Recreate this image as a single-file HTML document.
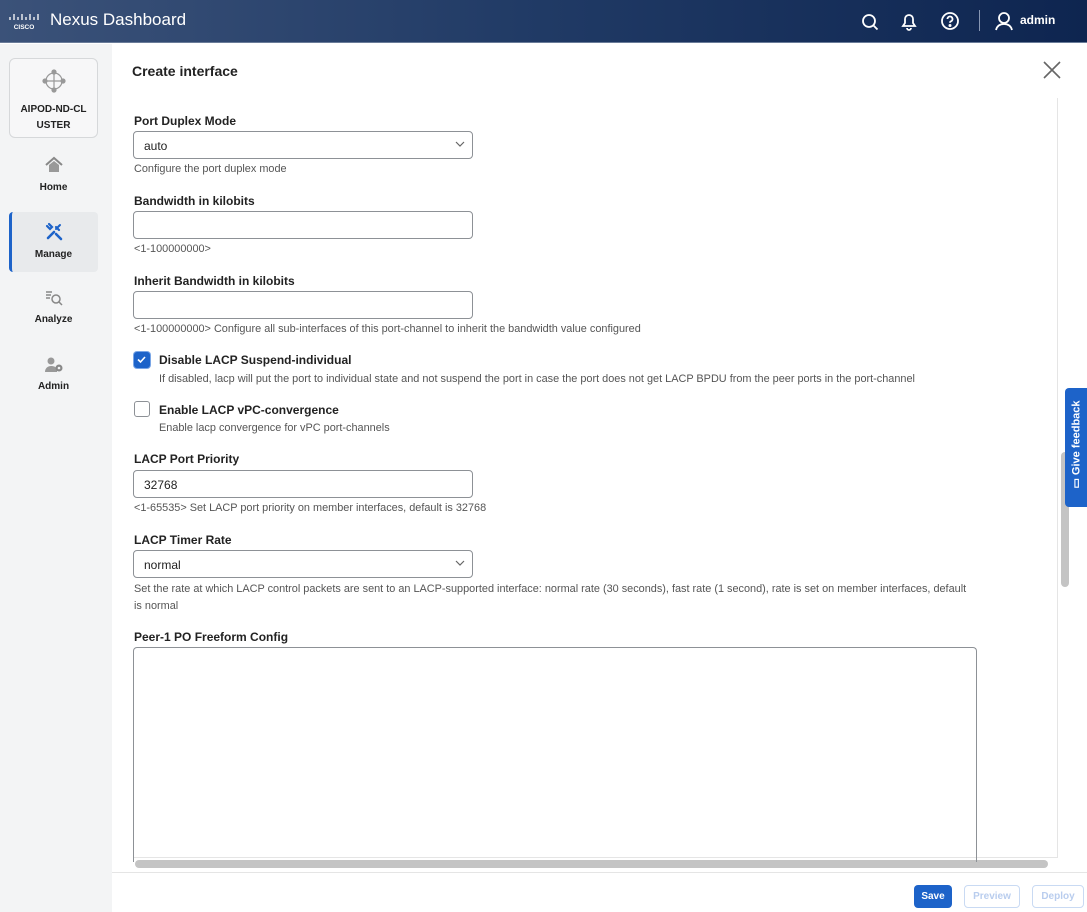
<!DOCTYPE html>
<html><head><meta charset="utf-8"><style>
*{box-sizing:border-box;margin:0;padding:0}
body{width:1087px;height:912px;overflow:hidden;font-family:"Liberation Sans",sans-serif;background:#fff;position:relative;color:#222}
.hdr{position:absolute;left:0;top:0;width:1087px;height:43px;background:linear-gradient(90deg,#3b5279,#203a65 50%,#0e2550);border-bottom:1px solid #6a7c99}
.hdr .t{position:absolute;left:50px;top:10px;color:#fff;font-size:17px}
.side{position:absolute;left:0;top:44px;width:112px;height:868px;background:#f3f4f5}
.card{position:absolute;left:9px;top:14px;width:89px;height:80px;border:1px solid #d6d8da;border-radius:6px;background:#f7f7f8;text-align:center;font-size:10px;font-weight:bold;line-height:16px;color:#222}
.nav{position:absolute;left:9px;width:89px;text-align:center;font-size:10px;font-weight:bold;color:#222}
.main{position:absolute;left:112px;top:44px;right:0;bottom:0;background:#fff}
.lbl{position:absolute;left:134px;font-size:12px;font-weight:bold;color:#222}
.inp{position:absolute;left:133px;width:340px;height:28px;border:1.5px solid #8d9196;border-radius:4px;font-size:12px;padding:7px 10px;color:#222}
.help{position:absolute;left:134px;font-size:10.9px;color:#555;white-space:nowrap}
.cb{position:absolute;left:134px;width:16px;height:16px;border:1.5px solid #8d9196;border-radius:3px}
.btn{position:absolute;top:885px;height:23px;border-radius:4px;font-size:10px;font-weight:bold;text-align:center;line-height:21px}
</style></head><body>
<div class="hdr">
<svg style="position:absolute;left:9px;top:11px" width="32" height="20" viewBox="0 0 32 20"><g stroke="#fff" stroke-width="1.3"><path d="M1 6v3M5 3v6M9 6v3M13 3v6M17 6v3M21 3v6M25 6v3M29 3v6"/></g><text x="15" y="18" fill="#fff" font-size="6.5" font-weight="bold" text-anchor="middle" font-family="Liberation Sans">CISCO</text></svg>
<div class="t">Nexus Dashboard</div>
<svg style="position:absolute;left:860px;top:12px" width="20" height="20" viewBox="0 0 20 20" fill="none" stroke="#fff" stroke-width="1.8"><circle cx="9" cy="9" r="6"/><path d="M13.5 13.5l4 4"/></svg>
<svg style="position:absolute;left:899px;top:11px" width="20" height="20" viewBox="0 0 20 20" fill="none" stroke="#fff" stroke-width="1.8"><path d="M4 15h12l-2-3V8a4 4 0 0 0-8 0v4z"/><path d="M8 17a2 2 0 0 0 4 0"/></svg>
<svg style="position:absolute;left:940px;top:11px" width="20" height="20" viewBox="0 0 20 20" fill="none" stroke="#fff" stroke-width="1.8"><circle cx="10" cy="10" r="8"/><path d="M7.5 8a2.5 2.5 0 1 1 3.5 2.3c-.7.3-1 .8-1 1.5"/><circle cx="10" cy="14.5" r=".6" fill="#fff"/></svg>
<div style="position:absolute;left:979px;top:10px;width:1px;height:21px;background:#8797b3"></div>
<svg style="position:absolute;left:994px;top:11px" width="20" height="20" viewBox="0 0 20 20" fill="none" stroke="#fff" stroke-width="1.8"><circle cx="10" cy="7" r="5"/><path d="M2 19c1-4 4-6 8-6s7 2 8 6"/></svg>
<div style="position:absolute;left:1020px;top:13px;color:#fff;font-size:12px;font-weight:bold">admin</div>
</div>
<div class="side">
<div class="card"><svg style="margin-top:9px" width="26" height="26" viewBox="0 0 26 26" fill="none" stroke="#999" stroke-width="1.2"><circle cx="13" cy="13" r="8"/><path d="M5 13h16M13 5v16"/><g fill="#999"><circle cx="13" cy="4" r="2"/><circle cx="13" cy="22" r="2"/><circle cx="4" cy="13" r="2"/><circle cx="22" cy="13" r="2"/></g></svg><div style="margin-top:2px">AIPOD-ND-CL<br>USTER</div></div>
<div class="nav" style="top:112px"><svg width="20" height="18" viewBox="0 0 20 18"><path d="M2 9L10 2l8 7" stroke="#888" stroke-width="2" fill="none"/><path d="M5 9v7h10V9L10 5z" fill="#999"/></svg><div style="margin-top:5px">Home</div></div>
<div style="position:absolute;left:9px;top:168px;width:89px;height:60px;background:#e8eaec;border-radius:4px;border-left:3px solid #1d63c9"></div>
<div class="nav" style="top:178px"><svg width="20" height="20" viewBox="0 0 20 20" fill="none" stroke="#1d63c9" stroke-width="2.6" stroke-linecap="round"><path d="M4 16l6-6M12 12l5 5"/><path d="M16 3l-4 4" stroke-width="2"/><path d="M3 4l3 3 2-2-3-3" stroke-width="2.2"/><path d="M12 5l3 3" stroke-width="2.2"/></svg><div style="margin-top:4px">Manage</div></div>
<div class="nav" style="top:245px"><svg width="20" height="18" viewBox="0 0 20 18" stroke="#888" stroke-width="1.5" fill="none"><path d="M2 3h6M2 6h5M2 9h4"/><circle cx="12" cy="10" r="4"/><path d="M15 13l3 3"/></svg><div style="margin-top:4px">Analyze</div></div>
<div class="nav" style="top:312px"><svg width="22" height="18" viewBox="0 0 22 18" fill="#999"><circle cx="8" cy="5" r="3.5"/><path d="M2 16c0-4 3-6 6-6s5 1 6 3v3z"/><circle cx="16" cy="12" r="3.5" fill="#888"/><circle cx="16" cy="12" r="1.3" fill="#f3f4f5"/></svg><div style="margin-top:4px">Admin</div></div>
</div>
<div class="main"></div>
<div style="position:absolute;left:132px;top:63px;font-size:14px;font-weight:bold;color:#222">Create interface</div>
<svg style="position:absolute;left:1042px;top:60px" width="20" height="20" viewBox="0 0 20 20" stroke="#666" stroke-width="1.6"><path d="M2 2l16 16M18 2L2 18"/></svg>
<div style="position:absolute;left:1057px;top:98px;width:1px;height:760px;background:#e5e5e5"></div>
<div style="position:absolute;left:1061px;top:452px;width:8px;height:135px;background:#c4c4c4;border-radius:4px"></div>
<div style="position:absolute;left:133px;top:857px;width:924px;height:1px;background:#e5e5e5"></div>
<div style="position:absolute;left:135px;top:860px;width:913px;height:8px;background:#c4c4c4;border-radius:4px"></div>
<div style="position:absolute;left:112px;top:872px;width:975px;height:1px;background:#e5e5e5"></div>

<div class="lbl" style="top:114px">Port Duplex Mode</div>
<div class="inp" style="top:131px">auto<svg style="position:absolute;right:7px;top:9px" width="10" height="7" viewBox="0 0 10 7" fill="none" stroke="#666" stroke-width="1.2"><path d="M1 1l4 4 4-4"/></svg></div>
<div class="help" style="top:163px">Configure the port duplex mode</div>
<div class="lbl" style="top:194px">Bandwidth in kilobits</div>
<div class="inp" style="top:211px"></div>
<div class="help" style="top:243px">&lt;1-100000000&gt;</div>
<div class="lbl" style="top:274px">Inherit Bandwidth in kilobits</div>
<div class="inp" style="top:291px"></div>
<div class="help" style="top:323px">&lt;1-100000000&gt; Configure all sub-interfaces of this port-channel to inherit the bandwidth value configured</div>
<div class="cb" style="top:352px;background:#1d63c9;border-color:#1d63c9;box-shadow:0 0 0 1px #7aa6e6"><svg width="13" height="13" viewBox="0 0 13 13" fill="none" stroke="#fff" stroke-width="1.6"><path d="M3 6.5l2.5 2.5L10 4"/></svg></div>
<div class="lbl" style="top:353px;left:159px">Disable LACP Suspend-individual</div>
<div class="help" style="top:373px;left:159px">If disabled, lacp will put the port to individual state and not suspend the port in case the port does not get LACP BPDU from the peer ports in the port-channel</div>
<div class="cb" style="top:401px"></div>
<div class="lbl" style="top:403px;left:159px">Enable LACP vPC-convergence</div>
<div class="help" style="top:422px;left:159px">Enable lacp convergence for vPC port-channels</div>
<div class="lbl" style="top:452px">LACP Port Priority</div>
<div class="inp" style="top:470px">32768</div>
<div class="help" style="top:502px">&lt;1-65535&gt; Set LACP port priority on member interfaces, default is 32768</div>
<div class="lbl" style="top:533px">LACP Timer Rate</div>
<div class="inp" style="top:550px">normal<svg style="position:absolute;right:7px;top:9px" width="10" height="7" viewBox="0 0 10 7" fill="none" stroke="#666" stroke-width="1.2"><path d="M1 1l4 4 4-4"/></svg></div>
<div class="help" style="top:581px;line-height:17px">Set the rate at which LACP control packets are sent to an LACP-supported interface: normal rate (30 seconds), fast rate (1 second), rate is set on member interfaces, default<br>is normal</div>
<div class="lbl" style="top:630px">Peer-1 PO Freeform Config</div>
<div style="position:absolute;left:133px;top:647px;width:844px;height:215px;border:1.5px solid #8d9196;border-bottom:none;border-radius:4px 4px 0 0"></div>

<div style="position:absolute;left:1065px;top:388px;width:22px;height:119px;background:#1d63c9;border-radius:4px 0 0 4px"><div style="position:absolute;left:-38px;top:50px;width:98px;transform:rotate(-90deg);color:#fff;font-size:11px;font-weight:bold;white-space:nowrap;text-align:center">▭ Give feedback</div></div>

<div class="btn" style="left:914px;width:38px;background:#1d63c9;color:#fff;line-height:23px">Save</div>
<div class="btn" style="left:964px;width:56px;border:1px solid #c9daf3;color:#b9cdee">Preview</div>
<div class="btn" style="left:1032px;width:52px;border:1px solid #c9daf3;color:#b9cdee">Deploy</div>
</body></html>
